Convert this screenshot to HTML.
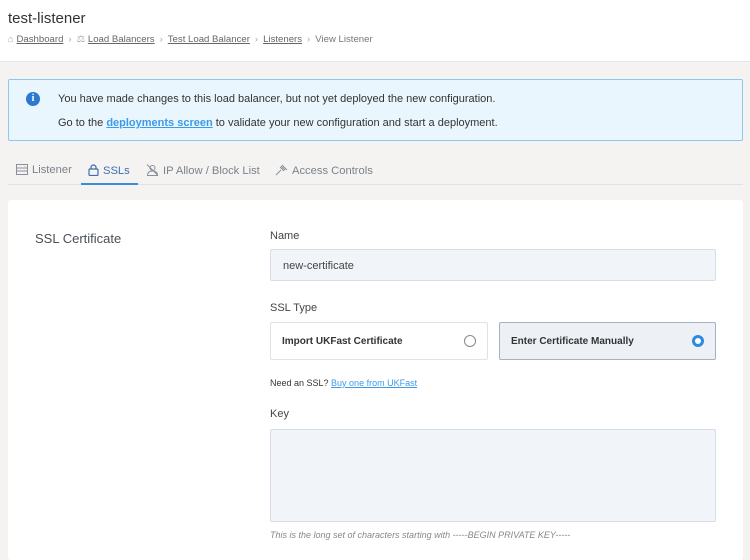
<!DOCTYPE html>
<html><head><style>
*{box-sizing:border-box;margin:0;padding:0}
body{width:750px;height:547px;overflow:hidden;background:#f4f3f2;font-family:"Liberation Sans",sans-serif;color:#3c4650;position:relative}
.hdr{position:absolute;left:0;top:0;width:750px;height:62px;background:#fff;border-bottom:1px solid #e6e6e6}
.title{position:absolute;left:8px;top:10px;font-size:15px;color:#333}
.bc{position:absolute;left:8px;top:34px;font-size:9.6px;color:#777;white-space:nowrap}
.bc a{color:#666;text-decoration:underline}
.bc .s{color:#aaa;margin:0 5px}
.alert{position:absolute;left:8px;top:79px;width:735px;height:62px;background:#eaf6fe;border:1px solid #8cc7ef;border-radius:2px;font-size:11px;color:#333}
.alert .i{position:absolute;left:17px;top:12px;width:14px;height:14px;border-radius:50%;background:#2c7ad0;color:#fff;font-size:10px;font-weight:bold;text-align:center;line-height:14px;font-family:"Liberation Serif",serif}
.alert p{position:absolute;left:49px}
.alert a{color:#3c9ae8;font-weight:bold;text-decoration:underline}
.tabs{position:absolute;left:8px;top:158px;width:735px;height:27px;border-bottom:1px solid #dde3ea;font-size:11.2px;color:#7a828a}
.tab{position:absolute;top:6px;white-space:nowrap}
.tab.on{color:#3a6fb0;}
.tab svg{vertical-align:-2px;margin-right:4px}
.ul{position:absolute;left:73px;top:25px;width:57px;height:2px;background:#3a8ed8}
.card{position:absolute;left:8px;top:200px;width:735px;height:360px;background:#fff;border-radius:3px}
.lbl{position:absolute;font-size:11px;color:#444}
.inp{position:absolute;left:262px;width:446px;background:#f1f4f8;border:1px solid #d7dde4;border-radius:2px}
.rb{position:absolute;top:122px;height:38px;border:1px solid #dfe3e7;border-radius:2px;font-size:10px;font-weight:bold;color:#333;padding:13px 0 0 11px}
.rad{position:absolute;right:11px;top:12px;width:12px;height:12px;border-radius:50%;border:1px solid #888}
</style></head><body>
<div class="hdr">
<div class="title">test-listener</div>
<div class="bc"><span style="color:#aaa">⌂</span> <a>Dashboard</a><span class="s">›</span><span style="color:#aaa">⚖</span> <a>Load Balancers</a><span class="s">›</span><a>Test Load Balancer</a><span class="s">›</span><a>Listeners</a><span class="s">›</span>View Listener</div>
</div>
<div class="alert"><div class="i">i</div>
<p style="top:13px">You have made changes to this load balancer, but not yet deployed the new configuration.</p>
<p style="top:37px">Go to the <a>deployments screen</a> to validate your new configuration and start a deployment.</p></div>
<div class="tabs">
<span class="tab" style="left:8px"><svg width="12" height="11" viewBox="0 0 12 11" fill="none" stroke="#8a9099"><rect x="0.5" y="0.5" width="11" height="10"/><path d="M0.5 4h11M0.5 7h11M9 2v0.5"/></svg>Listener</span>
<span class="tab on" style="left:80px"><svg width="11" height="12" viewBox="0 0 11 12" fill="none" stroke="#3a6fb0" stroke-width="1.2"><rect x="1" y="5" width="9" height="6.5" rx="1"/><path d="M3 5V3.5a2.5 2.5 0 0 1 5 0V5"/></svg>SSLs</span>
<span class="tab" style="left:138px"><svg width="13" height="12" viewBox="0 0 13 12" fill="none" stroke="#8a9099"><circle cx="6.5" cy="4" r="2.5"/><path d="M1.5 11.5c0-3 2-4.5 5-4.5s5 1.5 5 4.5zM1 0.5l11 11"/></svg>IP Allow / Block List</span>
<span class="tab" style="left:267px"><svg width="13" height="12" viewBox="0 0 13 12" fill="none" stroke="#8a9099"><path d="M1 11l5-5M5 3l4 4M7 1l5 5M6 2l4 4"/></svg>Access Controls</span>
<div class="ul"></div></div>
<div class="card">
<div class="lbl" style="left:27px;top:31px;font-size:13px;color:#4a5058">SSL Certificate</div>
<div class="lbl" style="left:262px;top:30px">Name</div>
<div class="inp" style="top:49px;height:32px;font-size:11px;padding:10px 12px;color:#444">new-certificate</div>
<div class="lbl" style="left:262px;top:102px">SSL Type</div>
<div class="rb" style="left:262px;width:218px">Import UKFast Certificate<div class="rad"></div></div>
<div class="rb" style="left:491px;width:217px;background:#edf1f6;border-color:#a5b2c2">Enter Certificate Manually<div class="rad" style="border:3.5px solid #2d8ae0;background:#fff"></div></div>
<div class="lbl" style="left:262px;top:178px;font-size:9px;color:#333">Need an SSL? <span style="color:#3c9ae8;text-decoration:underline">Buy one from UKFast</span></div>
<div class="lbl" style="left:262px;top:208px">Key</div>
<div class="inp" style="top:229px;height:93px"></div>
<div class="lbl" style="left:262px;top:330px;font-size:9px;font-style:italic;color:#888">This is the long set of characters starting with -----BEGIN PRIVATE KEY-----</div>
</div>
</body></html>
